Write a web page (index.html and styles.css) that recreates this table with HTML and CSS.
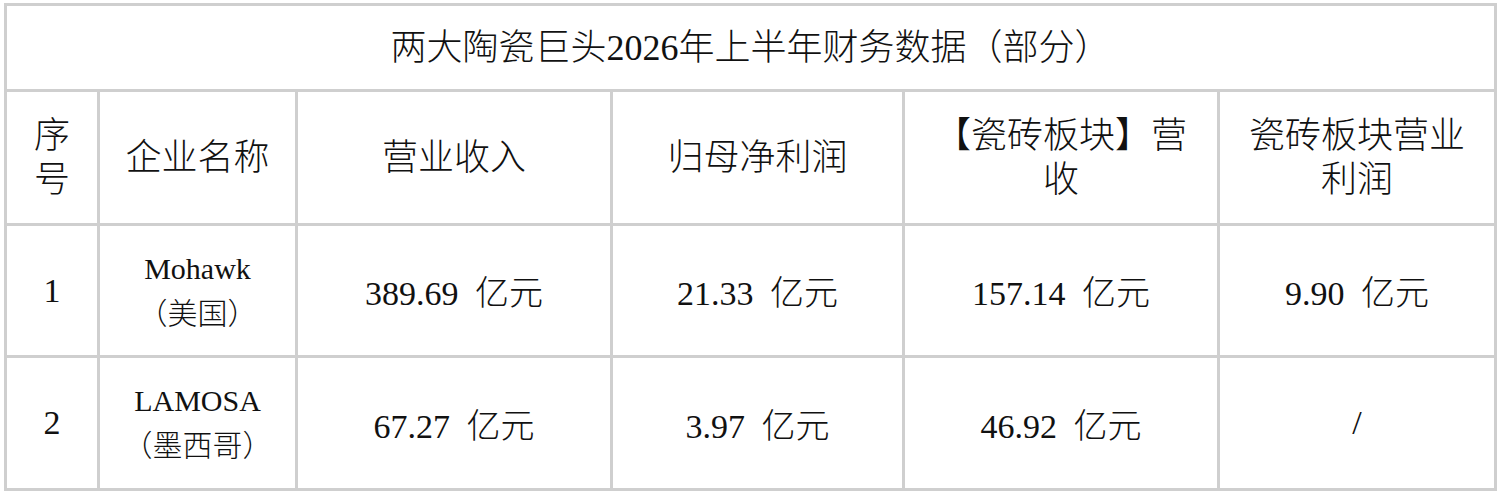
FILE: index.html
```html
<!DOCTYPE html>
<html lang="zh-CN">
<head>
<meta charset="utf-8">
<title>两大陶瓷巨头2026年上半年财务数据（部分）</title>
<link rel="stylesheet" href="styles.css">
</head>
<body>
<div class="sheet" role="table">
  <div class="cell title" role="row">两大陶瓷巨头2026年上半年财务数据（部分）</div>

  <div class="cell head" role="columnheader">序<br>号</div>
  <div class="cell head" role="columnheader">企业名称</div>
  <div class="cell head" role="columnheader">营业收入</div>
  <div class="cell head" role="columnheader">归母净利润</div>
  <div class="cell head" role="columnheader">【瓷砖板块】营<br>收</div>
  <div class="cell head" role="columnheader">瓷砖板块营业<br>利润</div>

  <div class="cell num" role="cell">1</div>
  <div class="cell name" role="cell">Mohawk<br>（美国）</div>
  <div class="cell val" role="cell">389.69 亿元</div>
  <div class="cell val" role="cell">21.33 亿元</div>
  <div class="cell val" role="cell">157.14 亿元</div>
  <div class="cell val" role="cell">9.90 亿元</div>

  <div class="cell num" role="cell">2</div>
  <div class="cell name" role="cell">LAMOSA<br>（墨西哥）</div>
  <div class="cell val" role="cell">67.27 亿元</div>
  <div class="cell val" role="cell">3.97 亿元</div>
  <div class="cell val" role="cell">46.92 亿元</div>
  <div class="cell val" role="cell">/</div>
</div>
</body>
</html>
```

FILE: styles.css
```css
html, body {
  margin: 0;
  padding: 0;
  background: #ffffff;
}

body {
  font-family: "Liberation Serif", "Noto Sans CJK SC", serif;
  color: #111111;
}

.sheet {
  display: grid;
  grid-template-columns: 90px 195px 312px 289px 312px 274px;
  grid-template-rows: 83px 131px 129px 130px;
  gap: 3px;
  padding: 3px;
  width: max-content;
  margin: 3px 0 0 4px;
  background: #cfcfcf;
}

.cell {
  background: #ffffff;
  display: flex;
  align-items: center;
  justify-content: center;
  text-align: center;
  font-weight: 300;
}

.title {
  grid-column: 1 / -1;
  font-size: 36px;
  line-height: 40px;
}

.head {
  font-size: 36px;
  line-height: 44px;
}

.num {
  font-size: 34px;
}

.name {
  font-size: 30px;
  line-height: 45px;
}

.val {
  font-size: 34px;
  word-spacing: 8px;
}
```
